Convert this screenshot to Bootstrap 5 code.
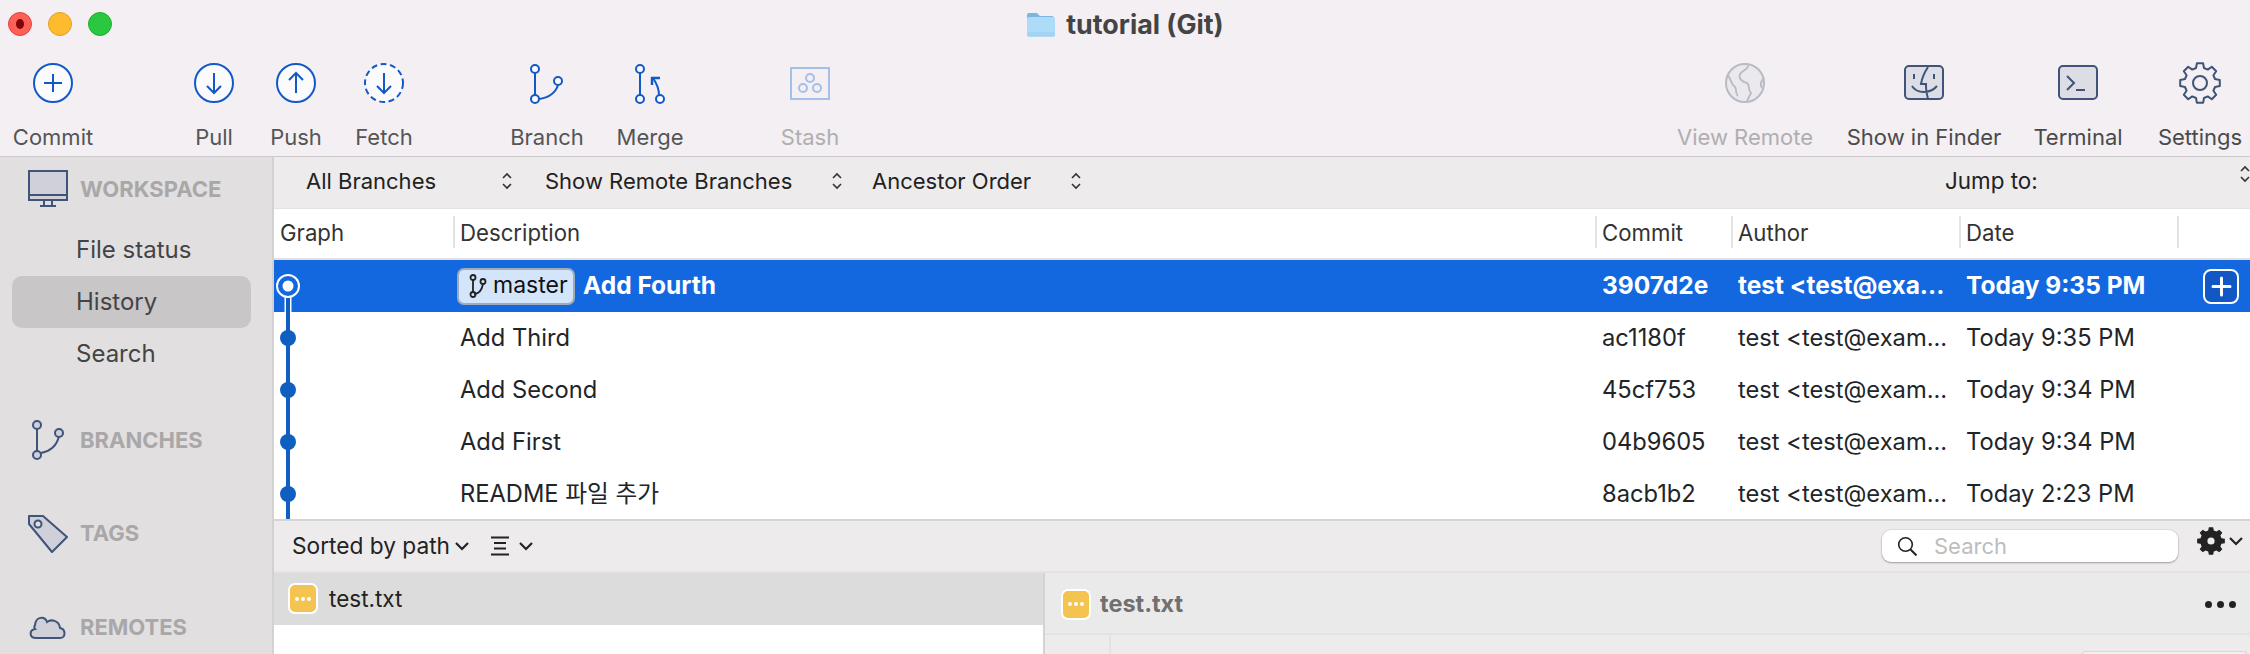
<!DOCTYPE html>
<html lang="en">
<head>
<meta charset="utf-8">
<title>tutorial (Git)</title>
<link href="https://cdn.jsdelivr.net/npm/bootstrap@5.3.0/dist/css/bootstrap.min.css" rel="stylesheet">
<style>
html,body{height:654px;overflow:hidden;background:#edebec}
body{font-family:Inter,"Noto Sans CJK KR","Liberation Sans",sans-serif;font-size:22px;color:#222;line-height:1.2}
.win-top{height:157px;background:#f3eff3;border-bottom:1px solid #cbc9ca}
.title-grid{display:grid;grid-template-columns:1fr auto 1fr;height:48px;align-items:center}
.lights{padding-left:8px;gap:16px}
.light{width:24px;height:24px;border-radius:50%;display:block}
.l-red{background:#fe5f57;border:1px solid #e0443e;position:relative}
.l-red::after{content:"";position:absolute;left:7px;top:6px;width:8px;height:10px;border-radius:50%;background:#7e0508}
.l-yel{background:#febb2e;border:1px solid #dea123}
.l-grn{background:#29c840;border:1px solid #20ac32}
.win-title{font-weight:700;font-size:26.8px;color:#444;gap:11px}
.tools{height:108px}
.tool{flex:none;text-align:center;font-size:22px;color:#555;height:108px;display:flex;flex-direction:column;align-items:center}
.tool svg{display:block;margin-top:14px;height:42px;width:100px;flex:none}
.tool span{margin-top:21px;white-space:nowrap;line-height:24px}
.tool.off{color:#b0aeb0}
.tool.dark{color:#4a4a4a}
.t1{width:106px}.t2{width:80px;margin-left:68px}.t3{width:80px;margin-left:2px}.t4{width:80px;margin-left:8px}
.t5{width:100px;margin-left:73px}.t6{width:100px;margin-left:3px}.t7{width:100px;margin-left:60px}
.t8{width:160px;margin-left:auto}.t9{width:180px;margin-left:9px}.t10{width:120px;margin-left:4px}.t11{width:100px;margin-left:12px}
.shell{height:497px}
.side{width:274px;flex:none;background:#e1dfe0;border-right:2px solid #d3d1d2;height:497px;overflow:hidden}
.sec{display:flex;align-items:center;font-weight:700;font-size:22px;color:#a9a7a8;height:40px}
.sec svg{flex:none;width:80px;height:40px;display:block}
.sec1{margin-top:12px}.sec2{margin-top:40px}.sec3{margin-top:53px}.sec4{margin-top:54px}
.side-item{margin:0 21px 0 12px;height:52px;line-height:52px;padding-left:64px;color:#444;border-radius:10px;font-size:24px}
.side-list{margin-top:15px}
.side-item.on{background:#c8c6c7}
.panes{min-width:0;height:497px}
.panes>*{flex:none}
.filter{height:52px;background:#edebec;border-bottom:1px solid #e4e2e3;padding-left:32px;padding-bottom:3px;position:relative;font-size:22px;color:#222}
.fitem{display:flex;align-items:center;flex:none}
.fitem svg{flex:none;display:block}
.f1{width:239px}.f2{width:327px}.f3{width:234px}
.f1 svg{margin-right:33px}.f2 svg{margin-right:30px}.f3 svg{margin-right:25px}
.jump{margin-left:auto;width:94px;margin-right:211px;white-space:nowrap;font-size:22.4px}
.jump-arrows{position:absolute;right:0;top:8px}
.commit-table{table-layout:fixed;width:1977px;margin:0;--bs-table-bg:transparent;border-collapse:separate;border-spacing:0}
.commit-table>:not(caption)>*>*{padding:0 0 0 7px;border:0;color:inherit;background:transparent;box-shadow:none;white-space:nowrap;overflow:hidden;font-size:23.7px;height:52px;vertical-align:middle;text-overflow:ellipsis}
.head-wrap{height:51px;background:#fff;border-bottom:2px solid #e2e0e1}
.commit-table>thead>tr>th{font-weight:400;height:49px;position:relative;color:#333;font-size:22.2px}
.commit-table>thead>tr>th:first-child{padding-left:6px}
.commit-table thead th+th::before{content:"";position:absolute;left:0;top:7px;height:32px;width:2px;background:#e4e4e4}
.list-wrap{height:259px;overflow:hidden;background:#fff}
.commit-table tbody tr.sel{background:#1368e0;color:#fff;font-weight:700}
.commit-table>tbody>tr.sel>td{font-size:24.5px}
.commit-table td.g{padding:0;position:relative}
.g svg{display:block}
.desc-line{display:flex;align-items:center}
.mast{display:inline-flex;align-items:center;height:37px;width:118px;background:#d3e5fb;border:2px solid #9fabb8;border-radius:7px;color:#111;font-weight:400;padding-left:10px;gap:6px;margin-right:8px;font-size:23px;margin-left:-3px;flex:none}
.plus-btn{width:36px;height:35px;border:2px solid #fff;border-radius:8px;background:#1258c4;margin-left:26px;display:flex;align-items:center;justify-content:center}
.commit-table td.pl{padding:0}
.sub-bar{height:54px;background:#edebec;border-top:2px solid #d6d4d5;border-bottom:2px solid #e4e2e3;padding-left:18px;font-size:22.7px;color:#222}
.sub-bar svg{display:block;flex:none}
.cv2{margin-left:9px}
.lst{margin-left:21px}
.srch{width:296px;height:32px;background:#fff;border-radius:9px;box-shadow:0 1px 2px #0000004d,0 0 0 1px #0000000d;margin-left:auto;padding-left:15px;gap:17px;color:#bdbdbd;font-size:22px}
.gearbox{width:72px;padding-left:19px;gap:3px;margin-bottom:10px}
.lower{height:81px;overflow:hidden}
.files{width:771px;flex:none;background:#fff;border-right:2px solid #d4d2d3;height:81px}
.file-row{height:52px;background:#dcdcdc;padding-left:14px;padding-bottom:1px;gap:11px;font-size:22.5px;color:#222}
.stat{width:30px;height:31px;background:#f5c350;border:2px solid #fff;border-radius:7px;display:flex;align-items:center;justify-content:center;gap:2px;flex:none}
.stat i{width:4px;height:4px;background:#fff;border-radius:50%;display:block}
.diff{min-width:0}
.diff-head{height:62px;background:#ebeaeb;border-bottom:2px solid #e4e3e4;padding:2px 14px 0 16px;gap:9px;font-weight:700;color:#707070;font-size:23.5px}
.dots3{margin-left:auto;gap:5px}
.dots3 i{width:7px;height:7px;background:#222;border-radius:50%;display:block}
.gutter{width:66px;border-right:2px solid #e4e3e4;height:19px}
.hunk{width:165px;height:3px;border:1px solid #d9d8d9;border-bottom:0;border-radius:7px 7px 0 0;background:#f1f0f1;margin-left:auto;margin-right:3px;margin-top:16px}
</style>
</head>
<body>
<div class="win-top">
  <div class="title-grid">
    <div class="d-flex lights"><span class="light l-red"></span><span class="light l-yel"></span><span class="light l-grn"></span></div>
    <div class="d-flex align-items-center win-title">
      <svg width="29" height="27" viewBox="0 0 29 27"><path d="M1 4a2 2 0 0 1 2-2h8l3 3h12a2 2 0 0 1 2 2v4H1z" fill="#7bb6e3"/><rect x="1" y="6" width="28" height="20" rx="2" fill="#aedcf8"/><path d="M1 22h28M1 24h28" stroke="#98cdee" stroke-width="1"/></svg>
      <span>tutorial (Git)</span>
    </div>
    <div></div>
  </div>
  <div class="d-flex tools">
    <div class="tool t1"><svg viewBox="0 0 100 42"><circle cx="50" cy="21" r="19" fill="#fbfafc" stroke="#1259c8" stroke-width="2"/><path d="M50 12v18M41 21h18" stroke="#1259c8" stroke-width="2" fill="none"/></svg><span>Commit</span></div>
    <div class="tool t2"><svg viewBox="0 0 100 42"><circle cx="50" cy="21" r="19" fill="#fbfafc" stroke="#1259c8" stroke-width="2"/><path d="M50 11v20M43 24l7 7 7-7" stroke="#1259c8" stroke-width="2" fill="none"/></svg><span>Pull</span></div>
    <div class="tool t3"><svg viewBox="0 0 100 42"><circle cx="50" cy="21" r="19" fill="#fbfafc" stroke="#1259c8" stroke-width="2"/><path d="M50 31V11M43 18l7-7 7 7" stroke="#1259c8" stroke-width="2" fill="none"/></svg><span>Push</span></div>
    <div class="tool t4"><svg viewBox="0 0 100 42"><circle cx="50" cy="21" r="19" fill="#fbfafc" stroke="#1259c8" stroke-width="2" stroke-dasharray="6 3.5"/><path d="M50 11v20M43 24l7 7 7-7" stroke="#1259c8" stroke-width="2" fill="none"/></svg><span>Fetch</span></div>
    <div class="tool t5"><svg viewBox="0 0 100 42"><g fill="#fbfafc" stroke="#1259c8" stroke-width="2"><path d="M38 11v22M42 37c10-1 17-7 19-14" fill="none"/><circle cx="38" cy="7" r="4"/><circle cx="38" cy="37" r="4"/><circle cx="61" cy="19" r="4"/></g></svg><span>Branch</span></div>
    <div class="tool t6"><svg viewBox="0 0 100 42"><g fill="#fbfafc" stroke="#1259c8" stroke-width="2"><path d="M40 11v22" fill="none"/><circle cx="40" cy="7" r="4"/><circle cx="40" cy="37" r="4"/><circle cx="60" cy="37" r="4"/><path d="M59 33c0-6-2-11-6-17" fill="none"/></g><path d="M51 16h9M52 15v8" stroke="#1259c8" stroke-width="2.4" fill="none"/></svg><span>Merge</span></div>
    <div class="tool t7 off"><svg viewBox="0 0 100 42"><rect x="31" y="6" width="38" height="31" fill="none" stroke="#a4bfe9" stroke-width="2"/><g fill="none" stroke="#a4bfe9" stroke-width="2"><circle cx="50" cy="16" r="4"/><circle cx="43" cy="26" r="4"/><circle cx="57" cy="26" r="4"/></g></svg><span>Stash</span></div>
    <div class="tool t8 off"><svg viewBox="0 0 100 42"><circle cx="50" cy="21" r="19" fill="#ebe9ee" stroke="#b8bac4" stroke-width="2"/><path d="M53 3c1 4-5 5-8 9-2 5 3 8 7 9 3 2 1 8 4 10l-4 8M33 13c3 5 3 9 7 12 2 3 0 6 3 9M69 16c-3 3-4 7-2 10" fill="none" stroke="#b8bac4" stroke-width="1.8"/></svg><span>View Remote</span></div>
    <div class="tool t9 dark"><svg viewBox="0 0 100 42"><rect x="31" y="4" width="38" height="33" rx="4" fill="#dddde6" stroke="#3f5478" stroke-width="2"/><path d="M54 5c-4 6-6 11-7 17h5v2M52 24c0 5 1 9 2 13M38 24c5 8 18 8 25 0M40 12v5M60 12v5" fill="none" stroke="#3f5478" stroke-width="2"/></svg><span>Show in Finder</span></div>
    <div class="tool t10 dark"><svg viewBox="0 0 100 42"><rect x="31" y="4" width="38" height="33" rx="4" fill="#dddde6" stroke="#3f5478" stroke-width="2"/><path d="M39 14l7 7-7 7M48 28h9" fill="none" stroke="#3f5478" stroke-width="2"/></svg><span>Terminal</span></div>
    <div class="tool t11 dark"><svg viewBox="0 0 100 42"><path transform="translate(50 21)" d="M-3.1-19.8H3.1L4-15 7.75-13.4 11.8-16.2 16.2-11.8 13.4-7.75 15-4 19.8-3.1V3.1L15 4 13.4 7.75 16.2 11.8 11.8 16.2 7.75 13.4 4 15 3.1 19.8H-3.1L-4 15-7.75 13.4-11.8 16.2-16.2 11.8-13.4 7.75-15 4-19.8 3.1V-3.1L-15-4-13.4-7.75-16.2-11.8-11.8-16.2-7.75-13.4-4-15Z" fill="none" stroke="#3f5478" stroke-width="2" stroke-linejoin="round"/><circle cx="50" cy="21" r="7" fill="none" stroke="#3f5478" stroke-width="2"/></svg><span>Settings</span></div>
  </div>
</div>
<div class="d-flex shell">
  <div class="side">
    <div class="sec sec1"><svg viewBox="0 0 80 40"><rect x="29" y="2" width="38" height="29" fill="#cfd0da" stroke="#3f5478" stroke-width="2"/><path d="M29 26h38M44 31v6M52 31v6M40 37h16" stroke="#3f5478" stroke-width="2" fill="none"/></svg><span>WORKSPACE</span></div>
    <div class="side-list">
      <div class="side-item">File status</div>
      <div class="side-item on">History</div>
      <div class="side-item">Search</div>
    </div>
    <div class="sec sec2"><svg viewBox="0 0 80 40"><g fill="#cfd0da" stroke="#3f5478" stroke-width="2"><path d="M37 8v23M41 33c10-2 16-8 18-17" fill="none"/><circle cx="37" cy="5" r="4"/><circle cx="37" cy="35" r="4"/><circle cx="59" cy="13" r="4"/></g></svg><span>BRANCHES</span></div>
    <div class="sec sec3"><svg viewBox="0 0 80 40"><path d="M29 3h14l24 21-15 15-23-28z" fill="#cfd0da" stroke="#3f5478" stroke-width="2" stroke-linejoin="round"/><circle cx="38" cy="11" r="3.5" fill="#e1dfe0" stroke="#3f5478" stroke-width="2"/></svg><span>TAGS</span></div>
    <div class="sec sec4"><svg viewBox="0 0 80 40"><path d="M36 31h24c6 0 6-9 0-10-1-8-9-9-13-6-2-6-11-6-12 3-1 2-1 3 0 4-6 1-6 9 1 9z" fill="#cfd0da" stroke="#3f5478" stroke-width="2"/></svg><span>REMOTES</span></div>
  </div>
  <div class="panes flex-grow-1 d-flex flex-column">
    <div class="filter d-flex align-items-center">
      <div class="fitem f1"><span class="flex-grow-1">All Branches</span><svg width="10" height="18" viewBox="0 0 10 18"><path d="M1 6l4-4 4 4M1 12l4 4 4-4" fill="none" stroke="#333" stroke-width="1.6"/></svg></div>
      <div class="fitem f2"><span class="flex-grow-1">Show Remote Branches</span><svg width="10" height="18" viewBox="0 0 10 18"><path d="M1 6l4-4 4 4M1 12l4 4 4-4" fill="none" stroke="#333" stroke-width="1.6"/></svg></div>
      <div class="fitem f3"><span class="flex-grow-1">Ancestor Order</span><svg width="10" height="18" viewBox="0 0 10 18"><path d="M1 6l4-4 4 4M1 12l4 4 4-4" fill="none" stroke="#333" stroke-width="1.6"/></svg></div>
      <div class="jump">Jump to:</div>
      <svg class="jump-arrows" width="10" height="18" viewBox="0 0 10 18"><path d="M1 6l4-4 4 4M1 12l4 4 4-4" fill="none" stroke="#333" stroke-width="1.6"/></svg>
    </div>
    <div class="head-wrap">
      <table class="table commit-table">
        <colgroup><col style="width:179px"><col style="width:1142px"><col style="width:136px"><col style="width:228px"><col style="width:218px"><col style="width:74px"></colgroup>
        <thead><tr><th>Graph</th><th>Description</th><th>Commit</th><th>Author</th><th>Date</th><th></th></tr></thead>
      </table>
    </div>
    <div class="list-wrap">
      <table class="table commit-table">
        <colgroup><col style="width:179px"><col style="width:1142px"><col style="width:136px"><col style="width:228px"><col style="width:218px"><col style="width:74px"></colgroup>
        <tbody>
          <tr class="sel"><td class="g"><svg width="40" height="52" viewBox="0 0 40 52"><path d="M14 26v26" stroke="#fff" stroke-width="7"/><path d="M14 26v26" stroke="#0f5fc0" stroke-width="4"/><circle cx="14" cy="26" r="11" fill="#1368e0" stroke="#fff" stroke-width="2"/><circle cx="14" cy="26" r="5.5" fill="#fff"/></svg></td><td><div class="desc-line"><span class="mast"><svg width="18" height="24" viewBox="0 0 18 24"><g fill="none" stroke="#222" stroke-width="1.8"><path d="M4 6v12M5 20c6 0 8-5 9-10"/><circle cx="4" cy="3.5" r="2.5"/><circle cx="4" cy="20.5" r="2.5"/><circle cx="14" cy="7.5" r="2.5"/></g></svg>master</span><span>Add Fourth</span></div></td><td>3907d2e</td><td>test &lt;test@exa...</td><td>Today 9:35 PM</td><td class="pl"><div class="plus-btn"><svg width="21" height="21" viewBox="0 0 21 21"><path d="M10.5 2v17M2 10.5h17" stroke="#fff" stroke-width="3" stroke-linecap="round"/></svg></div></td></tr>
          <tr><td class="g"><svg width="40" height="52" viewBox="0 0 40 52"><path d="M14 0v52" stroke="#0f5fc0" stroke-width="4"/><circle cx="14" cy="26" r="8" fill="#0f5fc0"/></svg></td><td>Add Third</td><td>ac1180f</td><td>test &lt;test@exam...</td><td>Today 9:35 PM</td><td></td></tr>
          <tr><td class="g"><svg width="40" height="52" viewBox="0 0 40 52"><path d="M14 0v52" stroke="#0f5fc0" stroke-width="4"/><circle cx="14" cy="26" r="8" fill="#0f5fc0"/></svg></td><td>Add Second</td><td>45cf753</td><td>test &lt;test@exam...</td><td>Today 9:34 PM</td><td></td></tr>
          <tr><td class="g"><svg width="40" height="52" viewBox="0 0 40 52"><path d="M14 0v52" stroke="#0f5fc0" stroke-width="4"/><circle cx="14" cy="26" r="8" fill="#0f5fc0"/></svg></td><td>Add First</td><td>04b9605</td><td>test &lt;test@exam...</td><td>Today 9:34 PM</td><td></td></tr>
          <tr><td class="g"><svg width="40" height="52" viewBox="0 0 40 52"><path d="M14 0v52" stroke="#0f5fc0" stroke-width="4"/><circle cx="14" cy="26" r="8" fill="#0f5fc0"/></svg></td><td>README 파일 추가</td><td>8acb1b2</td><td>test &lt;test@exam...</td><td>Today 2:23 PM</td><td></td></tr>
        </tbody>
      </table>
    </div>
    <div class="sub-bar d-flex align-items-center">
      <span>Sorted by path</span>
      <svg class="ms-1" width="16" height="10" viewBox="0 0 16 10"><path d="M2 2l6 6 6-6" fill="none" stroke="#222" stroke-width="2.2"/></svg>
      <svg class="lst" width="18" height="20" viewBox="0 0 18 20"><path d="M0 1.5h18M3 7h12M3 12.5h12M0 18.5h18" stroke="#222" stroke-width="2"/></svg>
      <svg class="cv2" width="16" height="10" viewBox="0 0 16 10"><path d="M2 2l6 6 6-6" fill="none" stroke="#222" stroke-width="2.2"/></svg>
      <div class="srch d-flex align-items-center"><svg width="20" height="20" viewBox="0 0 20 20"><circle cx="8.5" cy="8.5" r="6.8" fill="none" stroke="#222" stroke-width="1.6"/><path d="M13.5 13.5l6 6" stroke="#222" stroke-width="2"/></svg><span>Search</span></div>
      <div class="gearbox d-flex align-items-center"><svg width="28" height="28" viewBox="-14 -14 28 28"><path transform="scale(.7)" d="M-3.1-19.8H3.1L4-15 7.75-13.4 11.8-16.2 16.2-11.8 13.4-7.75 15-4 19.8-3.1V3.1L15 4 13.4 7.75 16.2 11.8 11.8 16.2 7.75 13.4 4 15 3.1 19.8H-3.1L-4 15-7.75 13.4-11.8 16.2-16.2 11.8-13.4 7.75-15 4-19.8 3.1V-3.1L-15-4-13.4-7.75-16.2-11.8-11.8-16.2-7.75-13.4-4-15Z" fill="#222"/><circle r="3.6" fill="#edebec"/></svg><svg width="16" height="10" viewBox="0 0 16 10"><path d="M2 2l6 6 6-6" fill="none" stroke="#222" stroke-width="2.2"/></svg></div>
    </div>
    <div class="lower d-flex">
      <div class="files">
        <div class="file-row d-flex align-items-center"><span class="stat"><i></i><i></i><i></i></span><span>test.txt</span></div>
      </div>
      <div class="diff flex-grow-1">
        <div class="diff-head d-flex align-items-center"><span class="stat"><i></i><i></i><i></i></span><span>test.txt</span><div class="dots3 d-flex"><i></i><i></i><i></i></div></div>
        <div class="d-flex"><div class="gutter"></div><div class="hunk"></div></div>
      </div>
    </div>
  </div>
</div>
</body>
</html>
